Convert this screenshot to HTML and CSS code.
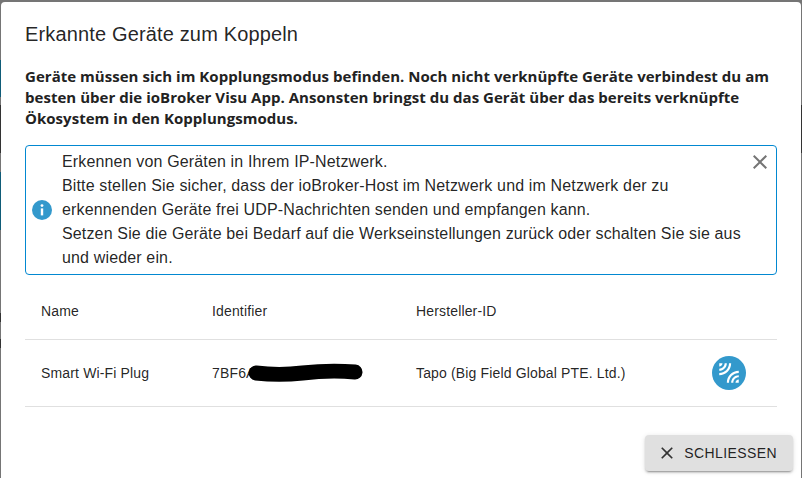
FILE: index.html
```html
<!DOCTYPE html>
<html lang="de">
<head>
    <meta charset="UTF-8">
    <meta name="viewport" content="width=device-width, initial-scale=1.0">
    <title>Erkannte Geräte zum Koppeln</title>
    <link rel="stylesheet" href="styles.css">
</head>
<body>
    <div class="dialog">
        <h2 class="dialog-title">Erkannte Geräte zum Koppeln</h2>

        <div class="dialog-content">
            <p class="hint">Geräte müssen sich im Kopplungsmodus befinden. Noch nicht verknüpfte Geräte verbindest du am besten über die ioBroker Visu App. Ansonsten bringst du das Gerät über das bereits verknüpfte Ökosystem in den Kopplungsmodus.</p>

            <div class="alert">
                <svg class="alert-icon" viewBox="0 0 20 20">
                    <circle cx="10" cy="10" r="10" fill="#3399cc"/>
                    <circle cx="10" cy="5.6" r="1.4" fill="#fff"/>
                    <rect x="8.8" y="8.4" width="2.4" height="7" fill="#fff"/>
                </svg>
                <div class="alert-text">
                    Erkennen von Geräten in Ihrem IP-Netzwerk.<br>
                    Bitte stellen Sie sicher, dass der ioBroker-Host im Netzwerk und im Netzwerk der zu erkennenden Geräte frei UDP-Nachrichten senden und empfangen kann.<br>
                    Setzen Sie die Geräte bei Bedarf auf die Werkseinstellungen zurück oder schalten Sie sie aus und wieder ein.
                </div>
                <svg class="alert-close" viewBox="0 0 24 24">
                    <path d="M19 6.41 17.59 5 12 10.59 6.41 5 5 6.41 10.59 12 5 17.59 6.41 19 12 13.41 17.59 19 19 17.59 13.41 12z"/>
                </svg>
            </div>

            <table class="devices">
                <thead>
                    <tr>
                        <th class="col-name">Name</th>
                        <th class="col-id">Identifier</th>
                        <th class="col-vendor">Hersteller-ID</th>
                        <th></th>
                    </tr>
                </thead>
                <tbody>
                    <tr>
                        <td>Smart Wi-Fi Plug</td>
                        <td>
                            <span class="redacted">7BF6A
                                <svg class="scribble" viewBox="0 0 116 20">
                                    <path d="M8 10C25 12 38 12 55 10S85 7 108 9"/>
                                </svg>
                            </span>
                        </td>
                        <td>Tapo (Big Field Global PTE. Ltd.)</td>
                        <td>
                            <button class="pair-button">
                                <svg viewBox="0 0 24 24">
                                    <path d="M6 3H3v3c1.66 0 3-1.34 3-3zm8 0h-2c0 4.97-4.03 9-9 9v2c6.08 0 11-4.93 11-11zm-4 0H8c0 2.76-2.24 5-5 5v2c3.87 0 7-3.13 7-7zm0 18h2c0-4.97 4.03-9 9-9v-2c-6.07 0-11 4.93-11 11zm8 0h3v-3c-1.66 0-3 1.34-3 3zm-4 0h2c0-2.76 2.24-5 5-5v-2c-3.87 0-7 3.13-7 7z"/>
                                </svg>
                            </button>
                        </td>
                    </tr>
                </tbody>
            </table>
        </div>

        <div class="dialog-actions">
            <button class="close-button">
                <svg viewBox="0 0 24 24">
                    <path d="M19 6.41 17.59 5 12 10.59 6.41 5 5 6.41 10.59 12 5 17.59 6.41 19 12 13.41 17.59 19 19 17.59 13.41 12z"/>
                </svg>
                Schliessen
            </button>
        </div>
    </div>
</body>
</html>
```

FILE: styles.css
```css
/* Abgedunkelte Seite hinter dem Dialog, nur am Rand sichtbar */
html, body {
    margin: 0;
    height: 100%;
}

body {
    box-sizing: border-box;
    height: 478px;
    padding: 2px 1px 0 1px;
    overflow: hidden;
    font-family: "Liberation Sans", Arial, sans-serif;
    color: rgba(0, 0, 0, 0.87);
    background:
        linear-gradient(to bottom,
            #757575 60px, #0f5c78 60px, #0f5c78 97px,
            #757575 97px, #757575 105px, #333 105px, #333 153px,
            #757575 153px, #757575 172px, #0f5c78 172px, #0f5c78 230px,
            #757575 230px, #757575 313px, #333 313px, #333 322px,
            #757575 322px, #757575 339px, #333 339px, #333 348px,
            #757575 348px) left / 1px 100% no-repeat,
        linear-gradient(to bottom,
            #757575 105px, #333 105px, #333 153px, #757575 153px) right / 1px 100% no-repeat,
        #757575;
}

.dialog {
    display: flex;
    flex-direction: column;
    height: 100%;
    background-color: #fff;
    border-radius: 4px 4px 0 0;
}

.dialog-title {
    margin: 0;
    padding: 16px 24px;
    font-size: 20px;
    font-weight: 400;
    line-height: 32px;
    letter-spacing: 0.0075em;
}

.dialog-content {
    flex: 1;
    padding: 0 24px;
}

.hint {
    margin: 0 0 16px;
    font-family: "Open Sans", Arial, sans-serif;
    font-size: 15px;
    font-weight: 700;
    line-height: 21px;
    letter-spacing: 0.03px;
    color: #222;
}

/* Hinweisbox */
.alert {
    display: flex;
    align-items: center;
    height: 130px;
    box-sizing: border-box;
    padding: 0 6px;
    border: 1px solid #0288d1;
    border-radius: 4px;
    margin-bottom: 8px;
    position: relative;
}

.alert-icon {
    flex: none;
    width: 20px;
    height: 20px;
    margin-right: 10px;
}

.alert-text {
    flex: 1;
    padding-right: 28px;
    font-size: 16px;
    line-height: 24px;
    letter-spacing: 0.00938em;
}

.alert-close {
    position: absolute;
    top: 4px;
    right: 4px;
    width: 24px;
    height: 24px;
    fill: #757575;
}

/* Tabelle */
.devices {
    width: 100%;
    border-collapse: collapse;
    table-layout: fixed;
    font-size: 14px;
    letter-spacing: 0.01071em;
}

.devices th,
.devices td {
    box-sizing: border-box;
    padding: 16px;
    line-height: 24px;
    font-weight: 400;
    text-align: left;
    border-bottom: 1px solid #e0e0e0;
}

.col-name { width: 171px; }
.col-id { width: 204px; }
.col-vendor { width: 296px; }

.redacted {
    position: relative;
    display: inline-block;
}

.scribble {
    position: absolute;
    left: 36px;
    top: 2px;
    width: 115px;
    height: 20px;
    fill: none;
    stroke: #000;
    stroke-width: 15;
    stroke-linecap: round;
}

.pair-button {
    display: flex;
    align-items: center;
    justify-content: center;
    width: 34px;
    height: 34px;
    padding: 0;
    border: none;
    border-radius: 50%;
    background-color: #3399cc;
    cursor: pointer;
}

.pair-button svg {
    flex: none;
    width: 26px;
    height: 26px;
    fill: #fff;
}

/* Fussbereich */
.dialog-actions {
    display: flex;
    justify-content: flex-end;
    padding: 0 8px 7px;
}

.close-button {
    display: flex;
    align-items: center;
    height: 36px;
    padding: 0 16px 0 12px;
    border: none;
    border-radius: 4px;
    background-color: #e0e0e0;
    color: rgba(0, 0, 0, 0.87);
    font-family: "Liberation Sans", Arial, sans-serif;
    font-size: 14px;
    letter-spacing: 0.02857em;
    text-transform: uppercase;
    box-shadow: 0 3px 1px -2px rgba(0, 0, 0, 0.2), 0 2px 2px 0 rgba(0, 0, 0, 0.14), 0 1px 5px 0 rgba(0, 0, 0, 0.12);
    cursor: pointer;
}

.close-button svg {
    width: 20px;
    height: 20px;
    margin-right: 7px;
    fill: #333;
}
```
